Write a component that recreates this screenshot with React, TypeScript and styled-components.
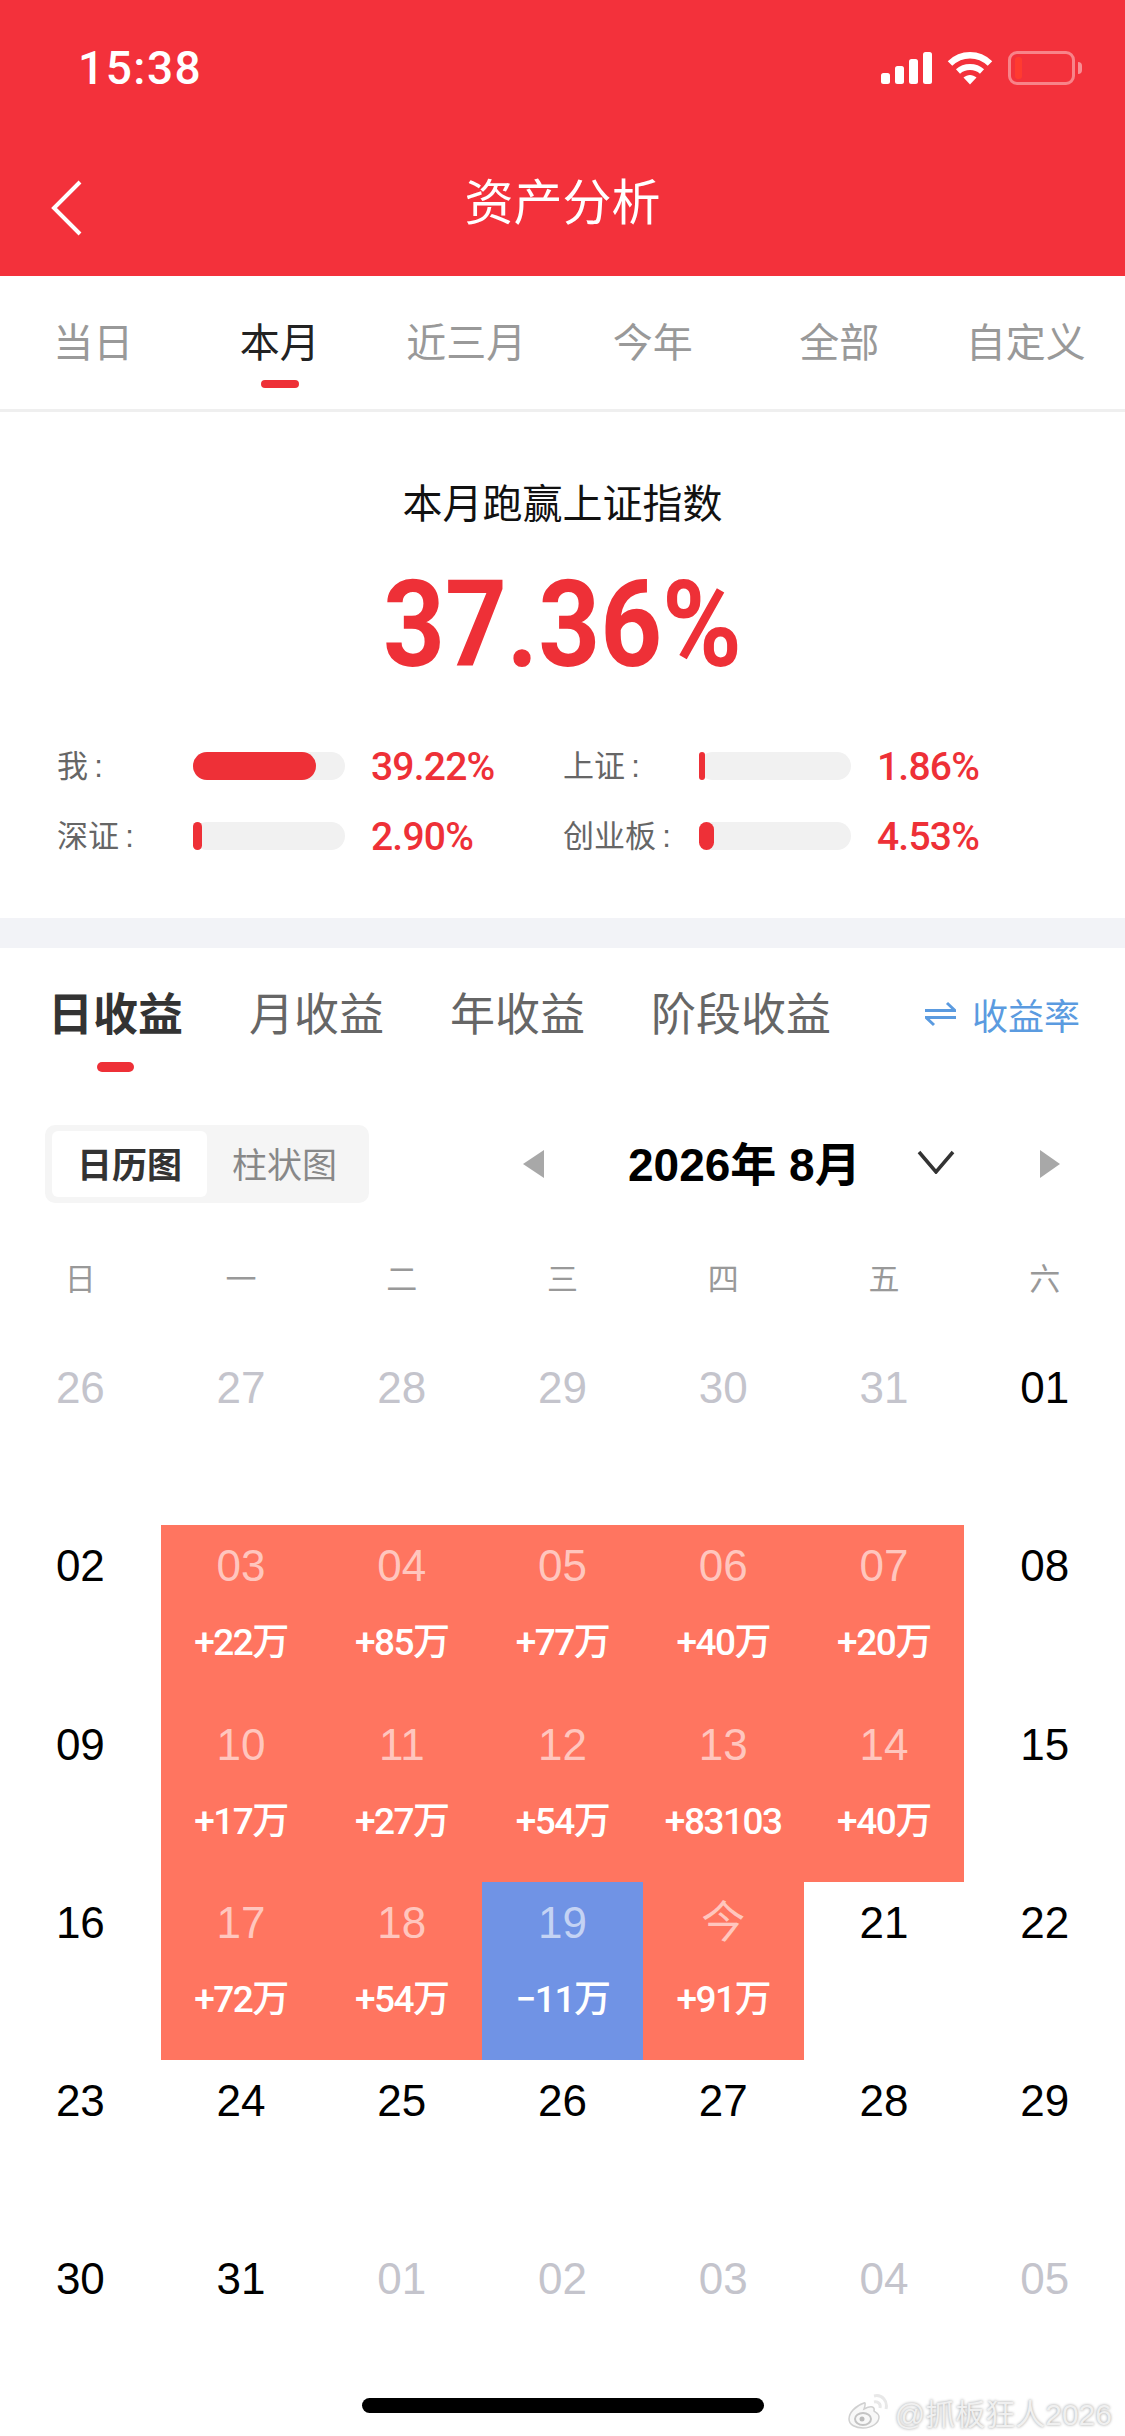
import styled, { createGlobalStyle } from "styled-components";

const periodTabs = ["当日", "本月", "近三月", "今年", "全部", "自定义"];
const earningTabs = ["日收益", "月收益", "年收益", "阶段收益"];
const weekdays = ["日", "一", "二", "三", "四", "五", "六"];

const stats = [
  { label: "我\u2009:", percent: 81, value: "39.22%" },
  { label: "上证\u2009:", percent: 4, value: "1.86%" },
  { label: "深证\u2009:", percent: 6, value: "2.90%" },
  { label: "创业板\u2009:", percent: 10, value: "4.53%" },
];

type Tone = "muted" | "plain" | "up" | "down";
type Day = { day: string; tone: Tone; amount?: string };

const up = (day: string, amount: string): Day => ({ day, tone: "up", amount });
const plain = (day: string): Day => ({ day, tone: "plain" });
const muted = (day: string): Day => ({ day, tone: "muted" });

const days: Day[] = [
  muted("26"), muted("27"), muted("28"), muted("29"), muted("30"), muted("31"), plain("01"),
  plain("02"), up("03", "+22万"), up("04", "+85万"), up("05", "+77万"), up("06", "+40万"), up("07", "+20万"), plain("08"),
  plain("09"), up("10", "+17万"), up("11", "+27万"), up("12", "+54万"), up("13", "+83103"), up("14", "+40万"), plain("15"),
  plain("16"), up("17", "+72万"), up("18", "+54万"), { day: "19", tone: "down", amount: "−11万" }, up("今", "+91万"), plain("21"), plain("22"),
  plain("23"), plain("24"), plain("25"), plain("26"), plain("27"), plain("28"), plain("29"),
  plain("30"), plain("31"), muted("01"), muted("02"), muted("03"), muted("04"), muted("05"),
];

const App = () => {
  return (
    <Page>
      <GlobalStyle />
      <RedHeader>
        <StatusBar>
          <Clock>15:38</Clock>
          <StatusIcons>
            <svg width="51" height="32" viewBox="0 0 51 32" fill="#fff">
              <rect x="0" y="21" width="9" height="11" rx="2.5" />
              <rect x="14" y="14" width="9" height="18" rx="2.5" />
              <rect x="28" y="7" width="9" height="25" rx="2.5" />
              <rect x="42" y="0" width="9" height="32" rx="2.5" />
            </svg>
            <svg width="46" height="34" viewBox="0 0 46 34" fill="none" stroke="#fff">
              <path d="M3 12.5C14.5 1.5 31.5 1.5 43 12.5" strokeWidth="6.5" />
              <path d="M11 20.5C17.5 14.5 28.5 14.5 35 20.5" strokeWidth="6" />
              <path d="M16.5 26.5L23 33.5L29.5 26.5C25.5 23 20.5 23 16.5 26.5Z" fill="#fff" stroke="none" />
            </svg>
            <Battery>
              <BatteryLevel />
            </Battery>
            <BatteryCap />
          </StatusIcons>
        </StatusBar>
        <NavBar>
          <BackIcon width="31" height="56" viewBox="0 0 31 56" fill="none" stroke="#fff" strokeWidth="4">
            <path d="M29 2L3 28L29 54" />
          </BackIcon>
          <NavTitle>资产分析</NavTitle>
        </NavBar>
      </RedHeader>

      <PeriodTabs>
        {periodTabs.map((tab) => (
          <PeriodTab key={tab} $active={tab === "本月"}>
            {tab}
          </PeriodTab>
        ))}
      </PeriodTabs>

      <Summary>
        <SummaryTitle>本月跑赢上证指数</SummaryTitle>
        <BigNumber>37.36%</BigNumber>
        <StatsGrid>
          {stats.map((stat) => (
            <Stat key={stat.label}>
              <StatLabel>{stat.label}</StatLabel>
              <Track>
                <Fill style={{ width: `${stat.percent}%` }} />
              </Track>
              <StatValue>{stat.value}</StatValue>
            </Stat>
          ))}
        </StatsGrid>
      </Summary>

      <Divider />

      <EarningTabs>
        {earningTabs.map((tab) => (
          <EarningTab key={tab} $active={tab === "日收益"}>
            {tab}
          </EarningTab>
        ))}
        <RateToggle>
          <svg width="31" height="26" viewBox="0 0 31 26" fill="none" stroke="#5b9be0" strokeWidth="3">
            <path d="M0 9.5H30L22 2" />
            <path d="M31 16.5H1L9 24" />
          </svg>
          收益率
        </RateToggle>
      </EarningTabs>

      <Controls>
        <Segment>
          <SegmentItem $active>日历图</SegmentItem>
          <SegmentItem>柱状图</SegmentItem>
        </Segment>
        <MonthNav>
          <Triangle $direction="left" />
          <MonthTitle>2026年 8月</MonthTitle>
          <MonthChevron width="38" height="24" viewBox="0 0 38 24" fill="none" stroke="#333" strokeWidth="3.5">
            <path d="M2 2L19 22L36 2" />
          </MonthChevron>
          <Triangle $direction="right" />
        </MonthNav>
      </Controls>

      <Weekdays>
        {weekdays.map((day) => (
          <Weekday key={day}>{day}</Weekday>
        ))}
      </Weekdays>

      <Calendar>
        {days.map((item, index) => (
          <Cell key={index} $tone={item.tone}>
            <DayNumber $tone={item.tone}>{item.day}</DayNumber>
            {item.amount && <Amount>{item.amount}</Amount>}
          </Cell>
        ))}
      </Calendar>

      <HomeIndicator />
      <Watermark>
        <svg width="42" height="36" viewBox="0 0 42 36" fill="none" stroke="#e8e8e8">
          <path d="M17 9C8 12 2 19 2 25C2 31 9 34 16 34C25 34 32 29 32 23C32 19 28 18 27 17C28 13 25 11 17 15C19 9 18 8 17 9Z" fill="#f8f8f8" stroke="#d0d0d0" strokeWidth="1.5" />
          <ellipse cx="16" cy="25" rx="8" ry="6" stroke="#c4c4c4" strokeWidth="2" />
          <circle cx="15" cy="25" r="2.5" fill="#bbb" stroke="none" />
          <path d="M27 8C31 7 34 10 33 14" strokeWidth="3" />
          <path d="M27 2C35 0 41 7 39 15" strokeWidth="3" />
        </svg>
        @抓板狂人2026
      </Watermark>
    </Page>
  );
};

export default App;

const SANS = `"Liberation Sans", "Noto Sans CJK SC", sans-serif`;
const NUMERIC = `Roboto, "Noto Sans CJK SC", sans-serif`;

const GlobalStyle = createGlobalStyle`
  html, body {
    margin: 0;
    padding: 0;
    background: #fff;
  }
  * {
    box-sizing: border-box;
  }
`;

const Page = styled.div`
  position: relative;
  width: 1125px;
  height: 2436px;
  overflow: hidden;
  background: #fff;
  font-family: ${SANS};
`;

const RedHeader = styled.header`
  height: 276px;
  background: #f3313b;
`;

const StatusBar = styled.div`
  display: flex;
  justify-content: space-between;
  align-items: center;
  height: 136px;
  padding: 0 43px 0 78px;
`;

const Clock = styled.div`
  color: #fff;
  font-family: ${NUMERIC};
  font-size: 46px;
  font-weight: 500;
  letter-spacing: 1.5px;
`;

const StatusIcons = styled.div`
  display: flex;
  align-items: center;
  gap: 15px;
`;

const Battery = styled.div`
  display: flex;
  align-items: center;
  width: 67px;
  height: 34px;
  padding: 0 4px;
  border: 3px solid rgba(255, 255, 255, 0.4);
  border-radius: 9px;
`;

const BatteryLevel = styled.div`
  width: 7px;
  height: 22px;
  border-radius: 3px;
  background: #ff3b30;
`;

const BatteryCap = styled.div`
  width: 4px;
  height: 12px;
  margin-left: -12px;
  border-radius: 0 4px 4px 0;
  background: rgba(255, 255, 255, 0.45);
`;

const NavBar = styled.div`
  position: relative;
  display: flex;
  align-items: center;
  justify-content: center;
  height: 132px;
`;

const BackIcon = styled.svg`
  position: absolute;
  left: 51px;
  top: 44px;
`;

const NavTitle = styled.div`
  padding-top: 2px;
  color: #fff;
  font-size: 49px;
  line-height: 60px;
`;

const PeriodTabs = styled.nav`
  display: flex;
  height: 136px;
  padding: 44px 6px 0 0;
  border-bottom: 3px solid #efefef;
`;

const PeriodTab = styled.div<{ $active?: boolean }>`
  flex: 1;
  display: flex;
  flex-direction: column;
  align-items: center;
  font-size: 40px;
  line-height: 46px;
  color: ${(p) => (p.$active ? "#222" : "#999")};

  &::after {
    content: "";
    width: 38px;
    height: 8px;
    margin-top: 14px;
    border-radius: 4px;
    background: ${(p) => (p.$active ? "#ee3037" : "transparent")};
  }
`;

const Summary = styled.section`
  display: flex;
  flex-direction: column;
  align-items: center;
  height: 506px;
  padding-top: 67px;
`;

const SummaryTitle = styled.div`
  color: #111;
  font-size: 40px;
  line-height: 50px;
`;

const BigNumber = styled.div`
  margin-top: 31px;
  color: #ee3037;
  font-family: ${NUMERIC};
  font-size: 120px;
  font-weight: 700;
  line-height: 130px;
  transform: scaleX(0.9);
`;

const StatsGrid = styled.div`
  display: grid;
  grid-template-columns: 506px 1fr;
  grid-auto-rows: 70px;
  width: 100%;
  margin-top: 41px;
  padding-left: 57px;
`;

const Stat = styled.div`
  display: flex;
  align-items: center;
`;

const StatLabel = styled.div`
  width: 136px;
  padding-bottom: 6px;
  color: #666;
  font-size: 31px;
`;

const Track = styled.div`
  width: 152px;
  height: 28px;
  border-radius: 14px;
  background: #f1f1f1;
`;

const Fill = styled.div`
  height: 100%;
  border-radius: 14px;
  background: #ee3037;
`;

const StatValue = styled.div`
  margin-left: 26px;
  padding-top: 2px;
  color: #ee3037;
  font-family: ${NUMERIC};
  font-size: 39px;
  font-weight: 500;
  letter-spacing: -0.8px;
`;

const Divider = styled.div`
  height: 30px;
  background: #f2f3f7;
`;

const EarningTabs = styled.nav`
  display: flex;
  gap: 66px;
  height: 124px;
  padding: 43px 45px 0 48px;
`;

const EarningTab = styled.div<{ $active?: boolean }>`
  display: flex;
  flex-direction: column;
  align-items: center;
  font-size: 45px;
  font-weight: ${(p) => (p.$active ? 700 : 400)};
  line-height: 50px;
  color: ${(p) => (p.$active ? "#333" : "#666")};

  &::after {
    content: "";
    width: 37px;
    height: 10px;
    margin-top: 21px;
    border-radius: 5px;
    background: ${(p) => (p.$active ? "#ee3037" : "transparent")};
  }
`;

const RateToggle = styled.div`
  display: flex;
  align-items: center;
  gap: 16px;
  height: 46px;
  margin-left: auto;
  color: #5b9be0;
  font-size: 36px;
`;

const Controls = styled.div`
  display: flex;
  align-items: center;
  height: 78px;
  margin-top: 53px;
  padding: 0 65px 0 45px;
`;

const Segment = styled.div`
  display: flex;
  width: 324px;
  height: 78px;
  padding: 6px 7px;
  border-radius: 10px;
  background: #f5f5f5;
`;

const SegmentItem = styled.div<{ $active?: boolean }>`
  display: flex;
  align-items: center;
  justify-content: center;
  flex: ${(p) => (p.$active ? "0 0 155px" : "1")};
  padding-bottom: 3px;
  border-radius: 6px;
  font-size: 35px;
  font-weight: ${(p) => (p.$active ? 700 : 400)};
  color: ${(p) => (p.$active ? "#333" : "#888")};
  background: ${(p) => (p.$active ? "#fff" : "transparent")};
`;

const MonthNav = styled.div`
  display: flex;
  align-items: center;
  margin-left: auto;
`;

const Triangle = styled.div<{ $direction: "left" | "right" }>`
  width: 0;
  height: 0;
  border-style: solid;
  border-color: transparent;
  border-width: 14px 0;
  ${(p) =>
    p.$direction === "left"
      ? "border-right: 21px solid #a8a8a8; margin-right: 84px;"
      : "border-left: 20px solid #a8a8a8; margin-left: 85px;"}
`;

const MonthTitle = styled.div`
  width: 232px;
  margin-right: 57px;
  padding-bottom: 7px;
  color: #000;
  font-size: 46px;
  font-weight: 700;
  white-space: nowrap;
`;

const MonthChevron = styled.svg`
  margin-bottom: 5px;
`;

const Weekdays = styled.div`
  display: grid;
  grid-template-columns: repeat(7, 1fr);
  align-items: center;
  height: 144px;
  padding-top: 2px;
`;

const Weekday = styled.div`
  color: #999;
  font-size: 31px;
  text-align: center;
`;

const Calendar = styled.div`
  display: grid;
  grid-template-columns: repeat(7, 1fr);
  grid-auto-rows: 178.25px;
`;

const toneBackground: Record<Tone, string> = {
  muted: "transparent",
  plain: "transparent",
  up: "#ff7560",
  down: "#7093e5",
};

const toneColor: Record<Tone, string> = {
  muted: "#c4c4cc",
  plain: "#000",
  up: "rgba(255, 255, 255, 0.6)",
  down: "rgba(255, 255, 255, 0.6)",
};

const Cell = styled.div<{ $tone: Tone }>`
  display: flex;
  flex-direction: column;
  align-items: center;
  padding-top: 16px;
  background: ${(p) => toneBackground[p.$tone]};
`;

const DayNumber = styled.div<{ $tone: Tone }>`
  font-size: 44px;
  line-height: 50px;
  color: ${(p) => toneColor[p.$tone]};
`;

const Amount = styled.div`
  margin-top: 27px;
  color: #fff;
  font-family: ${NUMERIC};
  font-size: 37px;
  font-weight: 500;
  line-height: 50px;
  letter-spacing: -1.5px;
`;

const HomeIndicator = styled.div`
  position: absolute;
  left: 362px;
  top: 2398px;
  width: 402px;
  height: 15px;
  border-radius: 8px;
  background: #000;
`;

const Watermark = styled.div`
  position: absolute;
  right: 13px;
  top: 2390px;
  display: flex;
  align-items: center;
  gap: 6px;
  color: #f0f0f0;
  font-size: 30px;
  text-shadow: 0 0 3px rgba(0, 0, 0, 0.4);
`;
